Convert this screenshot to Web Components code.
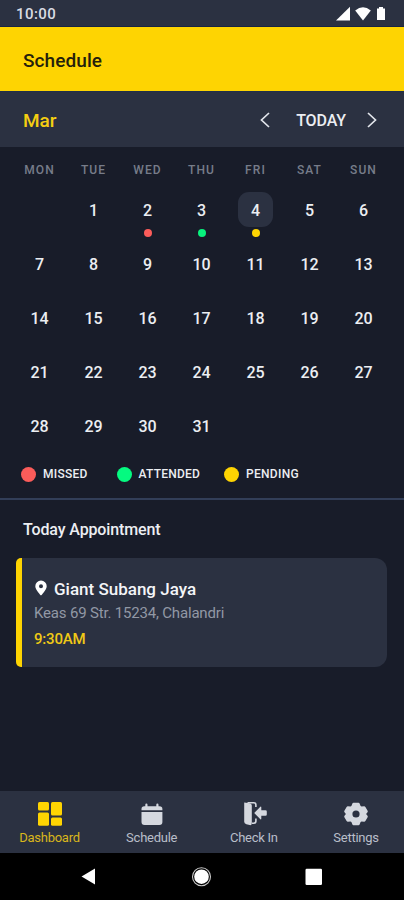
<!DOCTYPE html>
<html lang="en">
<head>
<meta charset="utf-8">
<title>Schedule</title>
<style>
body{margin:0;background:#181c29;font-family:Roboto,"Liberation Sans",sans-serif;color:#eceef2}
</style>
</head>
<body>
<schedule-app></schedule-app>
<script>
const define=(name,html,setup)=>{
  const t=document.createElement('template');
  t.innerHTML=html;
  customElements.define(name,class extends HTMLElement{
    constructor(){super();this.attachShadow({mode:'open'}).append(t.content.cloneNode(true));}
    connectedCallback(){if(setup)setup(this,this.shadowRoot);}
  });
};

define('status-bar',`<style>
:host{display:flex;height:27px;box-sizing:border-box;padding:0 18px 0 16px;background:#2b3141;justify-content:space-between;align-items:center;border-bottom:1px solid #182544}
span{font-size:15px;line-height:27px;font-weight:500;letter-spacing:.45px;color:#d9dce3;padding-top:3px}
svg{display:block;margin-top:1px}
</style><span>10:00</span>
<svg width="50" height="16" viewBox="0 0 50 16" fill="#fff"><path d="M0 14.5 14 .8v13.7z"/><path d="M19.2 4.5q7.8-6.6 15.6 0L27 14.5z"/><path d="M41 2.5h2V1h4v1.5h2V14h-8z"/></svg>`);

define('app-title',`<style>
:host{display:flex;height:64px;align-items:center;padding-left:23px;background:#fed402;color:#251f0c;font-size:19px;font-weight:500;letter-spacing:.08px}
span{padding-top:2px}
</style><span><slot></slot></span>`);

define('month-bar',`<style>
:host{display:flex;height:56px;box-sizing:border-box;padding:1px 26px 0 23px;align-items:center;background:#2b3141;border-top:1px solid #20304a}
b{font-size:19px;font-weight:500;color:#f5ce12;flex:1}
span{font-size:16px;font-weight:500;letter-spacing:-.1px;margin:0 22px 0 26px;color:#eceef2}
svg{display:block;fill:none;stroke:#e3e6ec;stroke-width:1.7}
</style><b><slot></slot></b><svg width="10" height="16"><path d="M9 1 1.5 8 9 15"/></svg><span>TODAY</span><svg width="10" height="16" style="margin-right:1px;margin-left:-1px"><path d="m1 1 7.5 7L1 15"/></svg>`);

define('calendar-day',`<style>
:host{display:flex;flex-direction:column;align-items:center;height:54px;font-size:16px;font-weight:500}
span{width:35px;height:35px;line-height:37px;border-radius:11px;text-align:center}
:host([selected]) span{background:#2b3141}
i{width:8px;height:8px;border-radius:50%;margin-top:2px}
</style><span><slot></slot></span><i></i>`,(h,r)=>{r.querySelector('i').style.background=h.getAttribute('dot')||'none';});

define('month-calendar',`<style>
:host{display:block;padding:0 12.5px;height:306px}
.w,.d{display:grid;grid-template-columns:repeat(7,54px)}
.w{height:45px;line-height:47px;text-align:center;font-size:12px;font-weight:500;letter-spacing:1.1px;color:#777c89}
</style><div class="w"></div><div class="d"></div>`,(h,r)=>{
  r.querySelector('.w').innerHTML=['MON','TUE','WED','THU','FRI','SAT','SUN'].map(x=>`<span>${x}</span>`).join('');
  const dots={2:'#fb5c5a',3:'#08f27d',4:'#fed402'};
  let out='<div></div>';
  for(let i=1;i<=31;i++)out+=`<calendar-day ${dots[i]?`dot="${dots[i]}"`:''} ${i===4?'selected':''}>${i}</calendar-day>`;
  r.querySelector('.d').innerHTML=out;
});

define('legend-item',`<style>
:host{display:flex;align-items:center;gap:7px;font-size:12px;font-weight:500}
i{width:15px;height:15px;border-radius:50%}
</style><i></i><span><slot></slot></span>`,(h,r)=>{r.querySelector('i').style.background=h.getAttribute('color');});

define('status-legend',`<style>
:host{display:flex;box-sizing:border-box;height:47px;padding:0 0 3px 21px;border-bottom:2px solid #323e58;align-items:center}
.a{width:95.5px;letter-spacing:.25px}.b{width:107.5px;letter-spacing:.25px}.c{letter-spacing:.3px}
</style><legend-item class="a" color="#fb5c5a">MISSED</legend-item><legend-item class="b" color="#05fa80">ATTENDED</legend-item><legend-item class="c" color="#fed402">PENDING</legend-item>`);

define('appointment-card',`<style>
:host{display:block;box-sizing:border-box;margin:0 17px 0 16px;height:109px;border-left:6px solid #fed402;border-radius:5px 12px 12px 5px;background:#2b3141;padding:20px 0 0 12px}
.t{display:flex;align-items:center;height:22px;gap:6px;font-size:17px;font-weight:500;letter-spacing:0;color:#f4f5f8}
.a{font-size:15px;line-height:26px;letter-spacing:-.18px;color:#9298a5}
.h{font-size:15px;line-height:26px;font-weight:500;letter-spacing:-.2px;color:#f0c916}
svg{display:block;margin:-3px 1px 0 1px}
</style><div class="t"><svg width="12" height="16" viewBox="0 0 12 16" fill="#fff" fill-rule="evenodd"><path d="M6 .5A5.7 5.7 0 0 0 .3 6.2C.3 10 6 15.5 6 15.5s5.7-5.5 5.7-9.3A5.7 5.7 0 0 0 6 .5zm0 3.7a2 2 0 1 1 0 4 2 2 0 0 1 0-4z"/></svg><slot name="place"></slot></div><div class="a"><slot name="address"></slot></div><div class="h"><slot name="time"></slot></div>`);

define('appointment-list',`<style>
:host{display:block;flex:1}
h2{margin:0;padding:1px 0 0 23px;height:57px;line-height:58px;font-size:16px;font-weight:500;letter-spacing:-.13px}
</style><h2>Today Appointment</h2><appointment-card><span slot="place">Giant Subang Jaya</span><span slot="address">Keas 69 Str. 15234, Chalandri</span><span slot="time">9:30AM</span></appointment-card>`);

define('tab-item',`<style>
:host{display:flex;flex:none;flex-direction:column;align-items:center;width:102.2px;padding-top:9px;box-sizing:border-box;font-size:13px;line-height:18px;letter-spacing:-.25px;color:#b9bec9}
:host([active]){color:#d9b61b}
span{margin-top:2px;display:block}
::slotted(svg){display:block;width:28px;height:27px}
</style><slot name="icon"></slot><span><slot></slot></span>`);

define('tab-bar',`<style>
:host{display:flex;height:62px;padding:0;background:#2b3141}
tab-item:first-of-type{margin-left:-1.6px}
svg{fill:#d5d8df}
</style>
<tab-item active><svg slot="icon" viewBox="0 0 28 27" style="fill:#fed402"><rect x="2" y="2" width="11" height="8.4" rx="1.5"/><rect x="2" y="12.4" width="11" height="13.4" rx="1.5"/><rect x="15" y="2" width="11" height="13.4" rx="1.5"/><rect x="15" y="17.4" width="11" height="8.4" rx="1.5"/></svg>Dashboard</tab-item>
<tab-item><svg slot="icon" viewBox="0 0 28 27"><path d="M3.5 10.2V9q0-2.8 2.8-2.8h1V4.7q0-1.2 1.1-1.2t1.1 1.2v1.5h8.8V4.7q0-1.2 1.1-1.2t1.1 1.2v1.5h1q2.9 0 2.9 2.8v1.2zM3.5 12h20.9v10q0 3-3 3H6.5q-3 0-3-3z"/></svg>Schedule</tab-item>
<tab-item><svg slot="icon" viewBox="0 0 28 27"><path d="M4.2 2.6 9.5 3.2q2.3.4 2.3 2.2v17.8q0 2.4-2.2 1.9l-3.2-.8q-2.2-.6-2.2-2.5z"/><path d="M7.5 2.8h6.2q2.2 0 2.2 2.2v2M12 23.2h1.7q2.2 0 2.2-2.2v-2.5" fill="none" stroke="#d5d8df" stroke-width="1.6"/><path d="m14.2 13 6.2-6.3q.9-.5.9.7v2.8h4.2q1.3 0 1.3 1.3v3q0 1.3-1.3 1.3h-4.2v2.8q0 1.2-.9.7z"/></svg>Check In</tab-item>
<tab-item><svg slot="icon" viewBox="0 0 28 27"><path fill-rule="evenodd" d="M10.3 3.7q.3-.9 1.2-.9h5q.9 0 1.2.9l.9 2.2 1 .6 2.4-.3q.9-.1 1.4.7l2.2 3.8q.5.8-.1 1.5l-1.4 1.8 1.4 1.8q.6.7.1 1.5l-2.2 3.8q-.5.8-1.4.7l-2.4-.3-1 .6-.9 2.2q-.3.9-1.2.9h-5q-.9 0-1.2-.9l-.9-2.2-1-.6-2.4.3q-.9.1-1.4-.7l-2.2-3.8q-.5-.8.1-1.5L3.9 14l-1.4-1.8q-.6-.7-.1-1.5l2.2-3.8q.5-.8 1.4-.7l2.4.3 1-.6zM14 10.4a3.6 3.6 0 1 0 0 7.2 3.6 3.6 0 0 0 0-7.2z"/></svg>Settings</tab-item>`);

define('system-nav',`<style>
:host{display:flex;height:47px;background:#000}
svg{display:block}
</style><svg width="404" height="47" viewBox="0 0 404 47" fill="#fff"><path d="M81.5 23.5 95 15.5v16z"/><circle cx="201.5" cy="23.7" r="7.3"/><circle cx="201.5" cy="23.7" r="9" fill="none" stroke="#c8c8c8" stroke-width="1.1"/><rect x="305.5" y="15.8" width="16.5" height="16.2" rx="1.2"/></svg>`);

define('schedule-app',`<style>
:host{display:flex;flex-direction:column;width:404px;height:900px;overflow:hidden;background:#181c29}
</style><status-bar></status-bar><app-title>Schedule</app-title><month-bar>Mar</month-bar><month-calendar></month-calendar><status-legend></status-legend><appointment-list></appointment-list><tab-bar></tab-bar><system-nav></system-nav>`);
</script>
</body>
</html>
